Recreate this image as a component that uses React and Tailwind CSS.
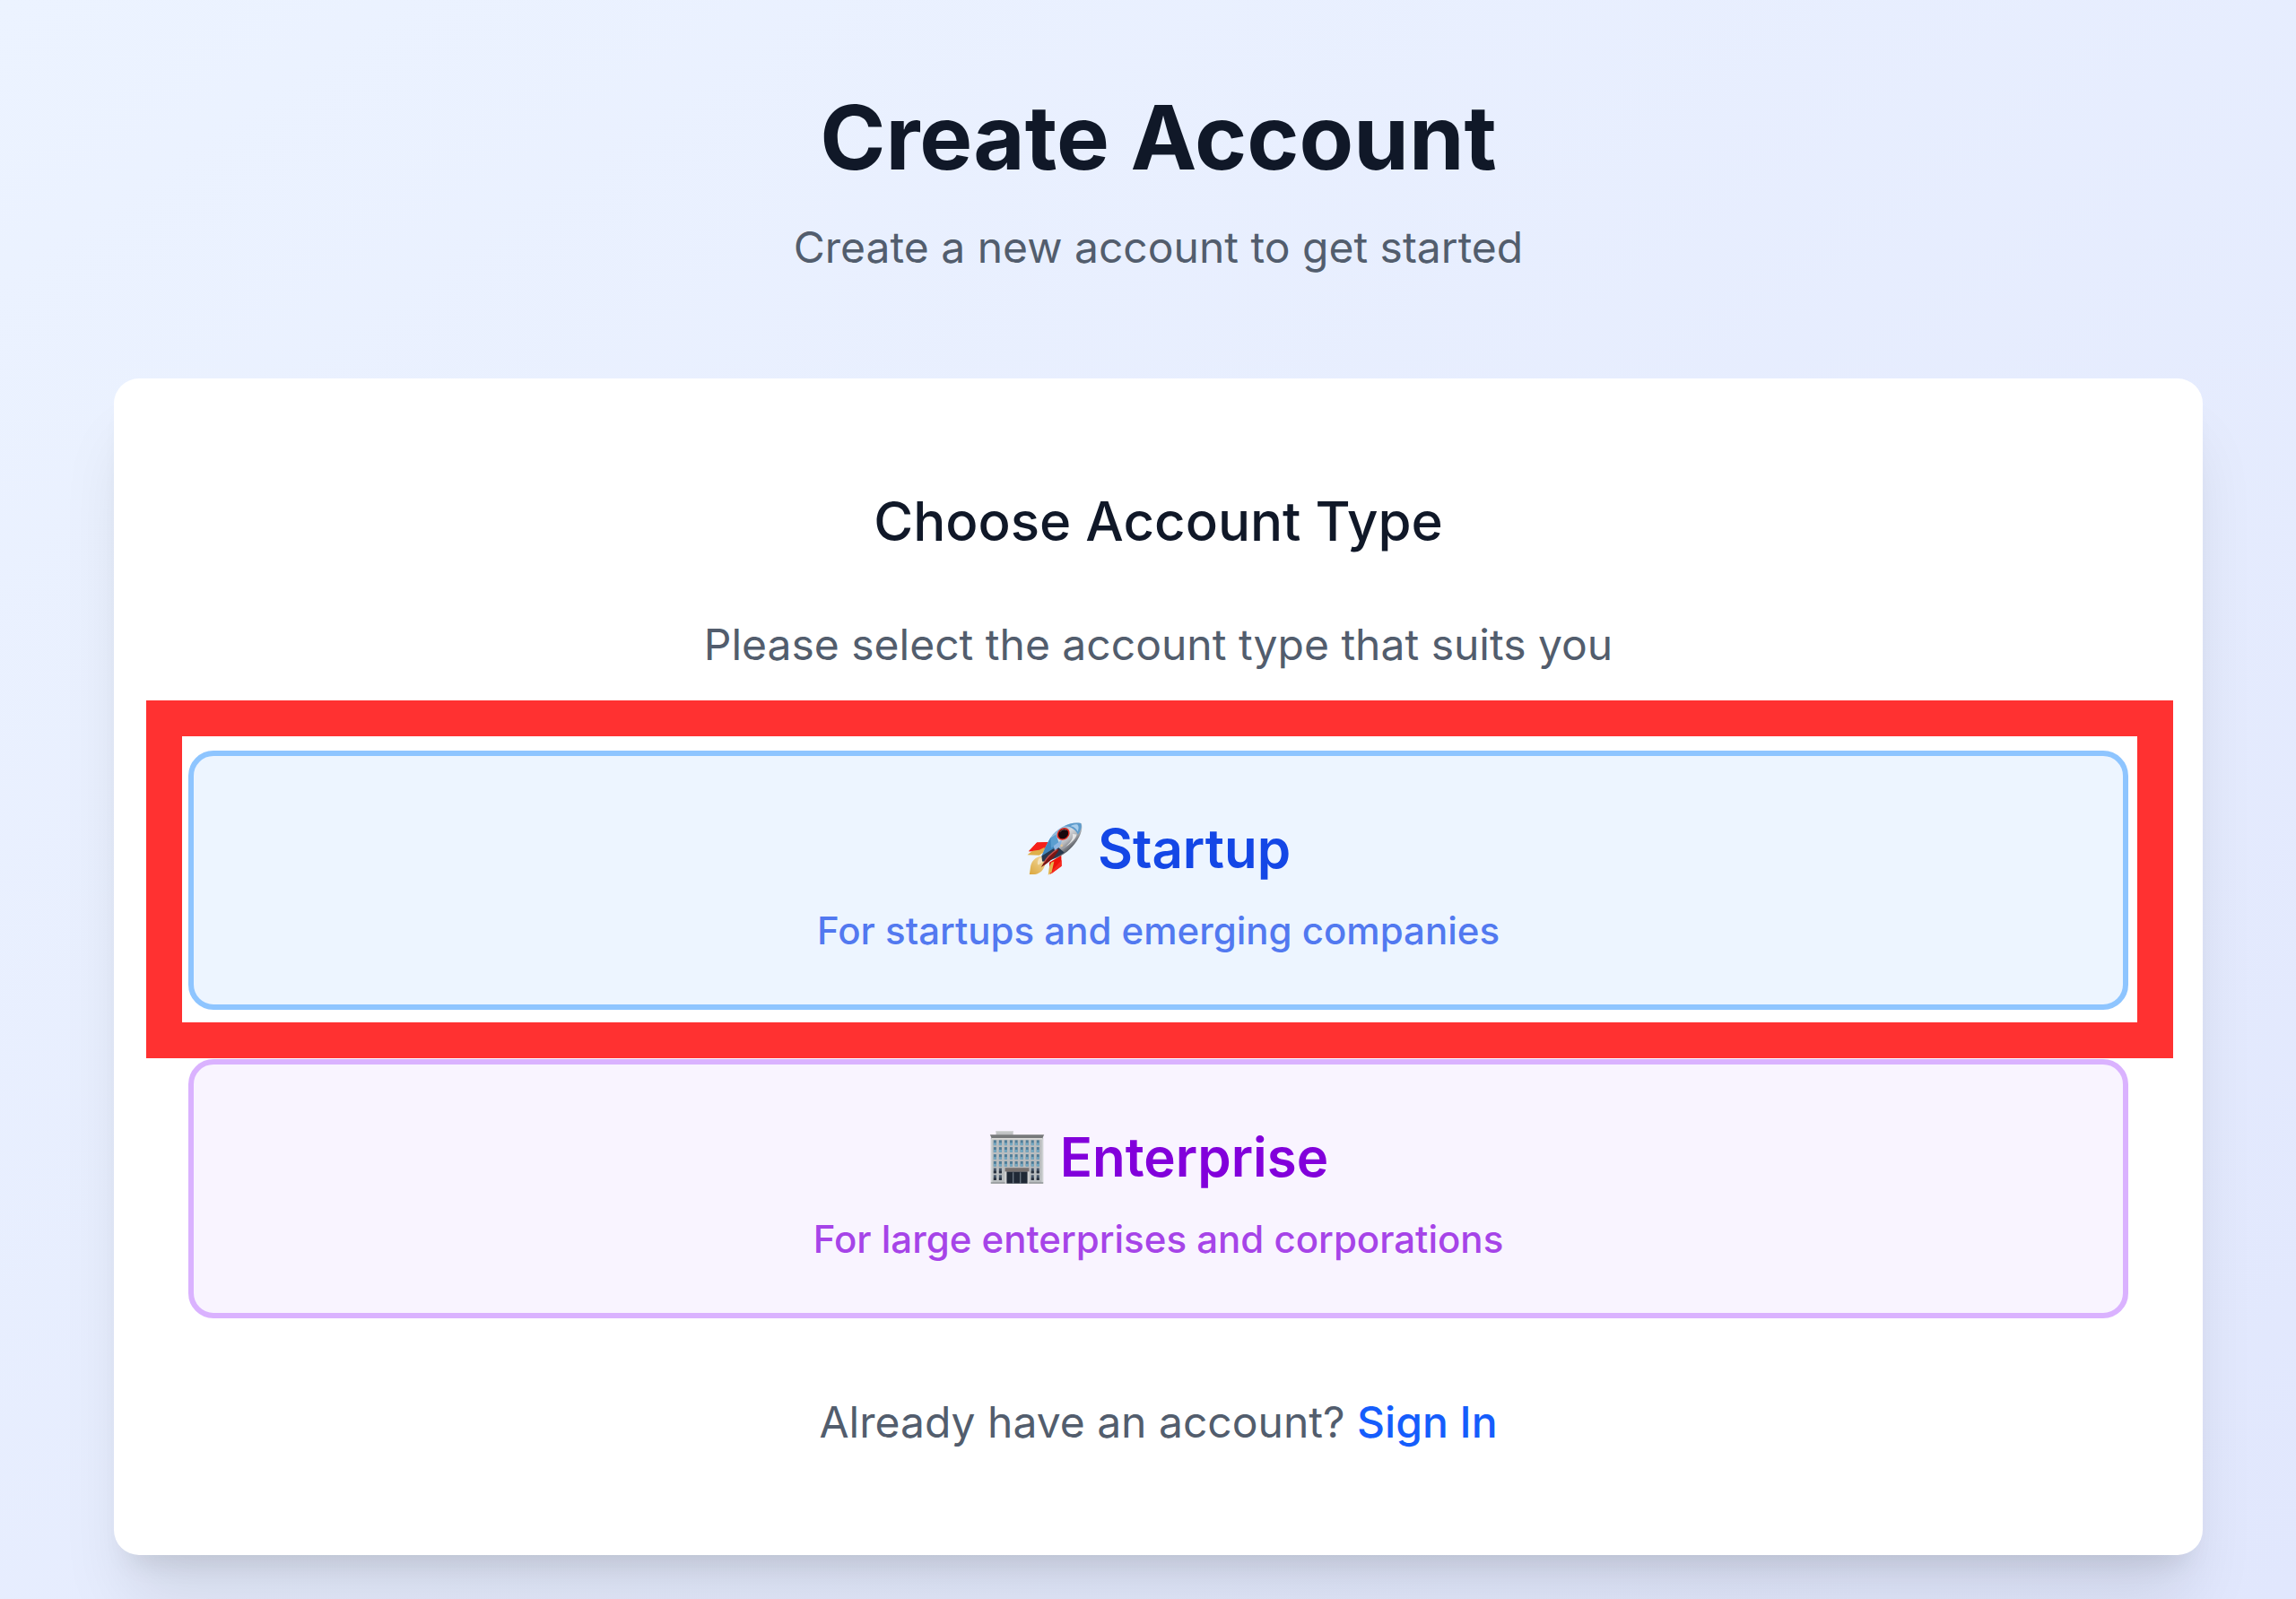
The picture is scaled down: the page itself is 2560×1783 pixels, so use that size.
import React from 'react';

function Rocket() {
  return (
    <svg viewBox="68 76 192 184" className="h-[61px] w-16 shrink-0" aria-hidden="true">
      <defs>
        <linearGradient id="hull" x1="165" y1="110" x2="220" y2="175" gradientUnits="userSpaceOnUse">
          <stop offset="0" stopColor="#7fb0d8" />
          <stop offset="0.35" stopColor="#d5d9dd" />
          <stop offset="0.6" stopColor="#b4b6ba" />
          <stop offset="1" stopColor="#3c4048" />
        </linearGradient>
        <linearGradient id="flame" x1="125" y1="200" x2="80" y2="255" gradientUnits="userSpaceOnUse">
          <stop offset="0" stopColor="#f0d698" />
          <stop offset="1" stopColor="#dba63c" />
        </linearGradient>
      </defs>
      <path d="M118 192 C100 196 86 208 83 226 L79 254 L98 254 C116 250 128 238 132 220 Z" fill="url(#flame)" />
      <path d="M114 198 C106 206 104 216 108 222 C116 220 124 214 128 206 Z" fill="#f4e3bd" />
      <path d="M146 145 L104 147 L76 176 L128 178 Z" fill="#f0150a" />
      <path d="M128 157 L93 172 L72 188 L112 190 L132 176 Z" fill="#dfb04a" />
      <path d="M146 145 L104 147 L78 176 L112 172 L136 160 Z" fill="#f5201a" />
      <path d="M186 190 L187 226 L148 254 L146 214 Z" fill="#ee1208" />
      <path d="M152 214 L162 210 L154 246 L142 256 L145 232 Z" fill="#e3b54e" />
      <path d="M187 206 L187 226 L154 251 L158 238 Z" fill="#f5281f" />
      <path d="M254 82 C218 74 170 98 150 130 C138 149 128 172 120 192 L124 210 L136 210 C166 204 202 186 224 160 C248 132 260 104 254 82 Z" fill="url(#hull)" />
      <path d="M150 130 C138 149 128 172 120 192 L136 190 L172 160 L170 126 Z" fill="#3f86bd" />
      <path d="M150 132 L168 120 L178 148 L152 166 Z" fill="#5b9ed0" />
      <path d="M172 160 L196 180 C178 194 156 204 136 210 L122 210 L120 192 Z" fill="#27384d" />
      <path d="M160 158 L188 138 L184 158 L164 174 Z" fill="#8fb7e2" />
      <path d="M252 82 C232 78 212 84 196 92 C216 92 234 102 242 120 C252 106 257 94 252 82 Z" fill="#5d9bcc" />
      <path d="M240 86 C230 84 221 88 218 92 C230 94 238 102 241 110 C245 101 246 93 240 86 Z" fill="#a9cdeb" />
      <path d="M224 118 C230 134 208 158 184 172 C206 160 234 140 238 120 Z" fill="#f3f3f3" opacity="0.8" />
      <path d="M180 168 C158 178 134 200 118 230 C146 214 166 194 180 168 Z" fill="#7d1513" />
      <path d="M172 170 C154 182 138 196 128 214" stroke="#c4514b" strokeWidth="4" fill="none" />
      <ellipse cx="193" cy="118" rx="23" ry="19" transform="rotate(-40 193 118)" fill="#e0241b" />
      <ellipse cx="193" cy="118" rx="18" ry="15" transform="rotate(-40 193 118)" fill="#16070c" />
      <path d="M182 112 C186 104 196 101 203 105" stroke="#6c4d50" strokeWidth="3" fill="none" />
      <circle cx="187" cy="157" r="4" fill="#e8c58e" />
    </svg>
  );
}

function Building() {
  const columns = [90, 108, 126, 144, 161, 179, 197, 215, 233];
  const rows = [126, 149, 173, 196, 219, 242];
  return (
    <svg viewBox="76 92 184 182" className="h-[61px] w-16 shrink-0" aria-hidden="true">
      <path d="M98 95 H155 V109 H98 Z" fill="#bfc1c2" />
      <path d="M98 95 H155 V99 H98 Z" fill="#d3d5d5" />
      <path d="M81 118 H255 V270 H81 Z" fill="#b9bdbf" />
      <path d="M81 118 H86 V270 H81 Z M250 118 H255 V270 H250 Z" fill="#cfd2d3" />
      <path d="M78 108 H258 L252 121 H84 Z" fill="#77797a" />
      <path d="M84 119 H252 V124 H84 Z" fill="#d8d8d6" />
      {rows.map((y, r) =>
        columns.map((x, c) =>
          r > 3 && c > 1 && c < 7 ? null : (
            <g key={`${x}-${y}`}>
              <rect x={x} y={y} width="9" height="17" fill={r > 3 ? '#46566a' : '#4f7d98'} />
              <rect x={x} y={y + 9} width="9" height="8" fill={r > 3 ? '#29323f' : '#76a9c2'} />
            </g>
          )
        )
      )}
      <path d="M128 218 H208 V231 H128 Z" fill="#77716f" />
      <path d="M133 231 H203 V270 H133 Z" fill="#202936" />
      <path d="M155 233 V270 M179 233 V270" stroke="#6b7682" strokeWidth="4" />
      <path d="M127 231 H133 V270 H127 Z M203 231 H209 V270 H203 Z" fill="#d1d2d2" />
      <path d="M81 266 H128 V270 H81 Z M208 266 H255 V270 H208 Z" fill="#94989b" />
    </svg>
  );
}

function AccountOption({ icon, title, description, box, titleColor, descriptionColor }) {
  return (
    <button type="button" className={`flex w-full flex-col items-center gap-[10px] rounded-[28px] border-[6px] py-[52px] ${box}`}>
      <span className={`flex items-center gap-4 text-[60px] leading-[102px] font-semibold ${titleColor}`}>
        {icon}
        <span>{title}</span>
      </span>
      <span className={`text-[42px] leading-[61px] font-medium ${descriptionColor}`}>{description}</span>
    </button>
  );
}

export default function App() {
  return (
    <main className="min-h-screen bg-linear-to-br from-[#ecf3ff] to-[#e1e7fd] pt-[98px] pr-[104px] pb-12 pl-[127px] font-['Inter',sans-serif]">
      <header className="mb-[110px] flex flex-col gap-8 text-center">
        <h1 className="text-[99px] leading-[110px] font-bold text-gray-900">Create Account</h1>
        <p className="text-[48px] leading-[72px] text-[#525d6d]">Create a new account to get started</p>
      </header>
      <section className="rounded-[28px] bg-white px-[83px] pt-[119px] pb-28 text-center shadow-[0_60px_75px_-15px_rgba(0,0,0,0.1),0_24px_30px_-18px_rgba(0,0,0,0.1)]">
        <h2 className="text-[60px] leading-[80px] font-medium text-gray-900">Choose Account Type</h2>
        <p className="mt-[62px] text-[48px] leading-[72px] text-[#525d6d]">Please select the account type that suits you</p>
        <div className="mt-[82px] flex flex-col gap-[55px]">
          <div className="relative">
            <AccountOption
              icon={<Rocket />}
              title="Startup"
              description="For startups and emerging companies"
              box="border-blue-300 bg-[#edf5ff]"
              titleColor="text-blue-700"
              descriptionColor="text-[#5279f0]"
            />
            <div className="pointer-events-none absolute -top-14 -right-[50px] -bottom-[54px] -left-[47px] border-[40px] border-[#ff3131]" />
          </div>
          <AccountOption
            icon={<Building />}
            title="Enterprise"
            description="For large enterprises and corporations"
            box="border-purple-300 bg-[#f9f4ff]"
            titleColor="text-purple-700"
            descriptionColor="text-[#a644e8]"
          />
        </div>
        <p className="mt-20 text-[48px] leading-[72px] text-[#525d6d]">
          Already have an account?{' '}
          <a href="#sign-in" className="font-medium text-blue-600">Sign In</a>
        </p>
      </section>
    </main>
  );
}
